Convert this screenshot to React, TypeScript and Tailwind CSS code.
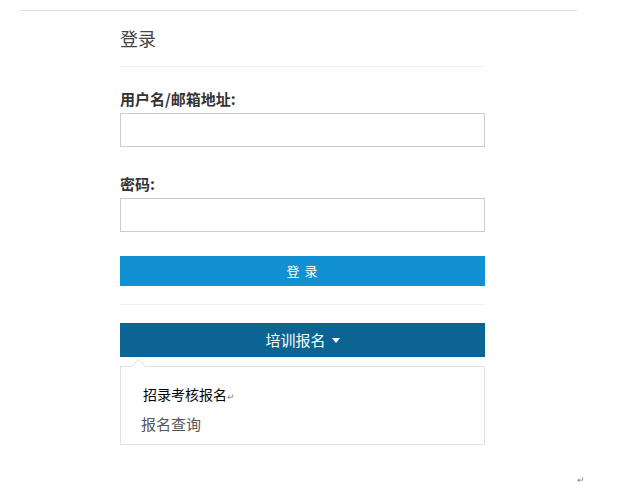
import { useState } from "react";

const font = "font-['Noto_Sans_CJK_SC','Noto_Sans',sans-serif]";

function Field({ label, type }: { label: string; type: string }) {
	return (
		<div>
			<label className="block text-[15px] leading-[20px] font-bold text-[#333] mb-[4px]">
				{label}
			</label>
			<input
				type={type}
				className="block w-full h-[34px] border border-[#ccc] bg-white px-3 outline-none"
			/>
		</div>
	);
}

export default function App() {
	const [open] = useState(true);

	return (
		<div className={`min-h-[488px] bg-white pt-[10px] ${font}`}>
			<div className="ml-[20px] w-[557px] border-t border-[#dcdcdc]" />

			<div className="ml-[120px] w-[365px]">
				<h1 className="mt-[15px] pb-[16px] border-b border-[#eee] text-[18px] leading-[24px] font-normal text-[#444]">
					登录
				</h1>

				<div className="mt-[22px] flex flex-col gap-[27px]">
					<Field label="用户名/邮箱地址:" type="text" />
					<Field label="密码:" type="password" />
				</div>

				<button className="mt-[24px] block w-full h-[30px] bg-[#1191d3] text-white text-[13px] tracking-[1px]">
					登 录
				</button>

				<div className="mt-[18px] border-t border-[#eee]" />

				<button className="mt-[18px] flex w-full h-[34px] items-center justify-center gap-[6px] bg-[#0b6491] text-white text-[15px]">
					培训报名
					<span className="w-0 h-0 border-l-[4px] border-r-[4px] border-t-[5px] border-l-transparent border-r-transparent border-t-white" />
				</button>

				{open && (
					<div className="relative mt-[9px] h-[79px] border border-[#e2e2e2] bg-white pt-[17px] pl-[20px]">
						<span className="absolute left-[12px] top-[-6px] w-[11px] h-[11px] rotate-45 bg-white border-l border-t border-[#e2e2e2]" />
						<div className="pl-[2px] text-[14px] leading-[20px] text-black">
							招录考核报名
							<span className="text-[9px] text-[#888]">↵</span>
						</div>
						<div className="mt-[7px] text-[15px] leading-[20px] text-[#555]">
							报名查询
						</div>
					</div>
				)}
			</div>

			<div className="mt-[30px] pl-[577px] text-[9px] leading-[10px] text-[#888]">↵</div>
		</div>
	);
}
